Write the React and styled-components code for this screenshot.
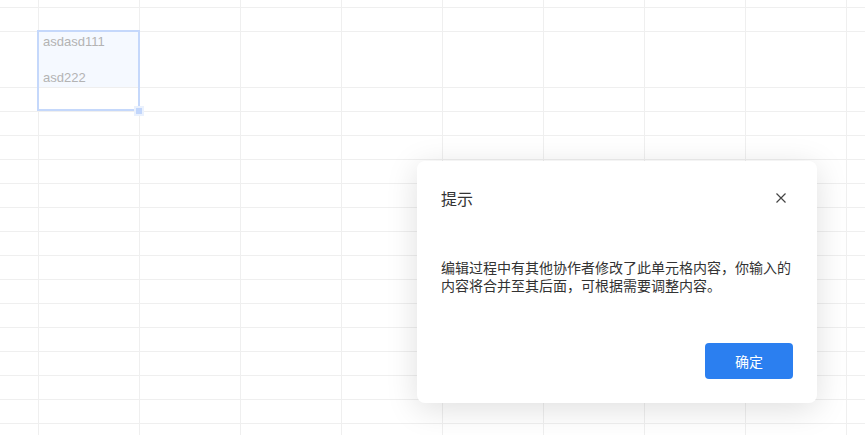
import React from "react";
import styled, { createGlobalStyle } from "styled-components";

const Global = createGlobalStyle`
  html, body { margin: 0; padding: 0; background: #fff; }
  body { width: 865px; height: 435px; overflow: hidden; font-family: "Noto Sans CJK SC", "Noto Sans", sans-serif; }
  * { box-sizing: border-box; }
`;

const Stage = styled.div`
  position: relative;
  width: 865px;
  height: 435px;
  overflow: hidden;
  background: #fff;
`;

const Sheet = styled.div`
  display: grid;
  grid-template-columns: 39px repeat(9, 101px);
  grid-template-rows: 8px 24px 56px repeat(16, 24px);
`;

const Cell = styled.div`
  border-right: 1px solid #efefef;
  border-bottom: 1px solid #efefef;
  background: ${(p) => (p.$active ? "#f5f9ff" : "#fff")};
  padding: 1px 4px 0;
  font-family: "Liberation Sans", Arial, sans-serif;
  font-size: 13px;
  line-height: 18px;
  color: #b3b3b3;
  white-space: pre;
  overflow: hidden;
`;

const Selection = styled.div`
  position: absolute;
  left: 37px;
  top: 30px;
  width: 103px;
  height: 81px;
  border: 2px solid #c5d8fb;
  pointer-events: none;
`;

const Handle = styled.div`
  position: absolute;
  left: 134px;
  top: 106px;
  width: 10px;
  height: 10px;
  background: #c2d6fb;
  border: 2px solid #eaf1fd;
`;

const Dialog = styled.div`
  position: absolute;
  left: 417px;
  top: 161px;
  width: 400px;
  height: 242px;
  background: #fff;
  border-radius: 8px;
  box-shadow: 0 6px 32px rgba(0, 0, 0, 0.13);
  padding: 24px;
  display: flex;
  flex-direction: column;
`;

const Header = styled.div`
  display: flex;
  align-items: center;
  justify-content: space-between;
  height: 26px;
`;

const Title = styled.div`
  font-size: 16px;
  line-height: 26px;
  color: #333;
`;

const CloseButton = styled.button`
  width: 24px;
  height: 24px;
  border: 0;
  padding: 0;
  background: transparent;
  display: flex;
  align-items: center;
  justify-content: center;
  color: #444;
  cursor: pointer;
`;

const Body = styled.p`
  margin: 47px 0 0;
  font-family: "Noto Sans CJK SC", sans-serif;
  font-size: 14px;
  line-height: 18px;
  color: #333;
`;

const Footer = styled.div`
  margin-top: auto;
  display: flex;
  justify-content: flex-end;
`;

const PrimaryButton = styled.button`
  width: 88px;
  height: 36px;
  border: 0;
  border-radius: 4px;
  background: #2b7ff0;
  color: #fff;
  font-family: "Noto Sans CJK SC", sans-serif;
  font-size: 14px;
  cursor: pointer;
`;

const ROWS = 19;
const COLS = 10;

export default function App() {
  const cells = [];
  for (let r = 0; r < ROWS; r++) {
    for (let c = 0; c < COLS; c++) {
      const active = r === 2 && c === 1;
      cells.push(
        <Cell key={`${r}-${c}`} $active={active}>
          {active ? "asdasd111\n\nasd222" : null}
        </Cell>
      );
    }
  }
  return (
    <Stage>
      <Global />
      <Sheet>{cells}</Sheet>
      <Selection />
      <Handle />
      <Dialog>
        <Header>
          <Title>提示</Title>
          <CloseButton aria-label="close">
            <svg width="10" height="10" viewBox="0 0 10 10">
              <path d="M0.5 0.5 L9.5 9.5 M9.5 0.5 L0.5 9.5" stroke="currentColor" strokeWidth="1.2" fill="none" />
            </svg>
          </CloseButton>
        </Header>
        <Body>编辑过程中有其他协作者修改了此单元格内容，你输入的内容将合并至其后面，可根据需要调整内容。</Body>
        <Footer>
          <PrimaryButton>确定</PrimaryButton>
        </Footer>
      </Dialog>
    </Stage>
  );
}
